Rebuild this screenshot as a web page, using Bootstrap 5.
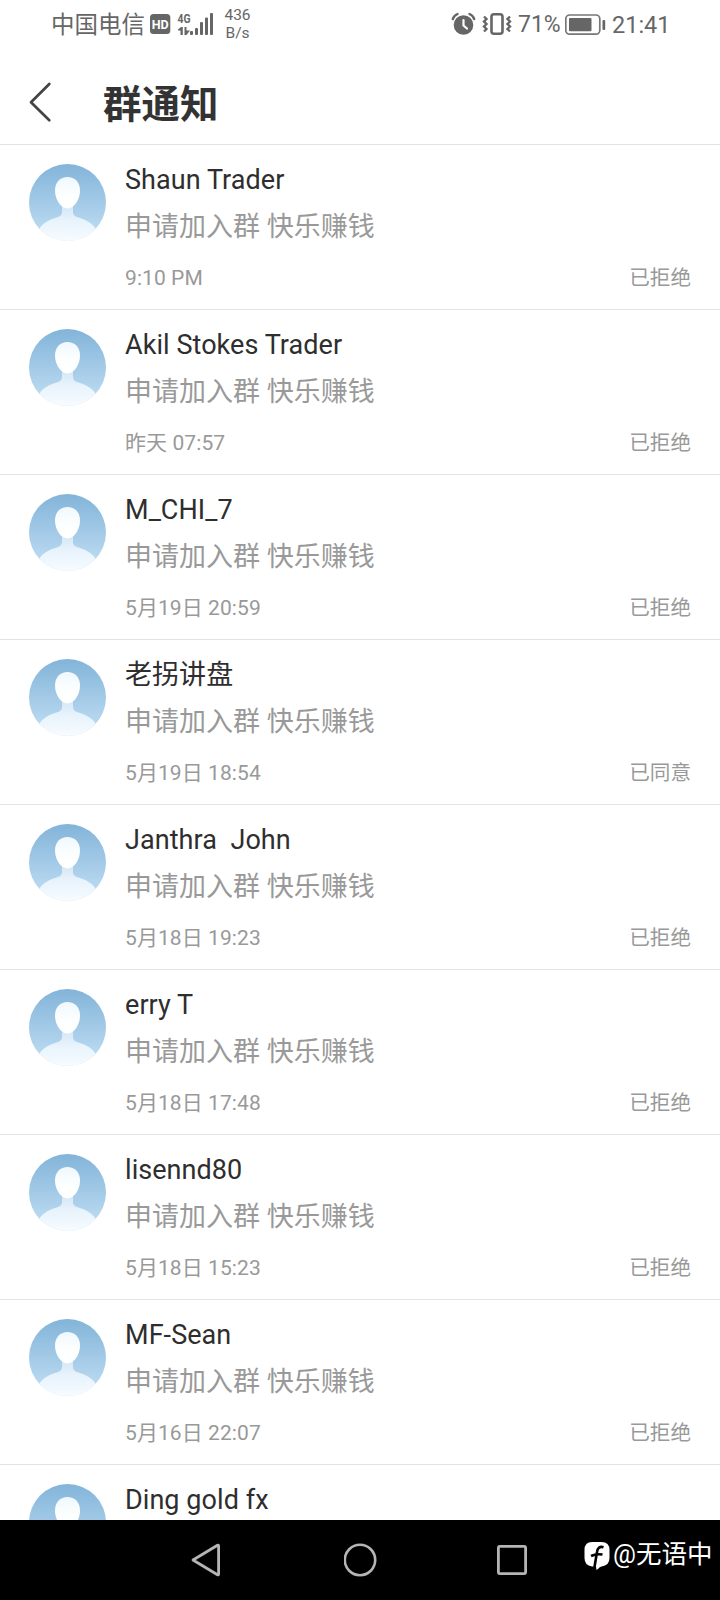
<!DOCTYPE html>
<html lang="zh-CN">
<head>
    <meta charset="UTF-8">
    <meta name="viewport" content="width=device-width, initial-scale=1.0">
    <title>群通知</title>
    <link href="https://cdn.jsdelivr.net/npm/bootstrap@5.3.3/dist/css/bootstrap.min.css" rel="stylesheet">
    <style>
        body { font-family: Roboto, "Noto Sans CJK SC", sans-serif; color: #2e2e2e; background: #fff; }
        svg { display: block; flex: none; }
        .screen { width: 720px; height: 1600px; }

        .status-bar { height: 50px; padding: 0 51px 0 51px; color: #666; font-size: 23.5px; line-height: 50px; }
        .status-bar svg { margin-top: 10px; }
        .carrier { width: 99px; }
        .net-speed { font-size: 15.5px; line-height: 18px; padding-top: 6px; width: 45px; }
        .battery-text { font-size: 23px; width: 47px; margin-left: 5px; }
        .clock { width: 57px; margin-left: 6px; }

        .title-bar { height: 95px; border-bottom: 1px solid #e3e3e3; padding-left: 28px; }
        .title-bar h1 { font-size: 38.5px; line-height: 50px; margin: 26px 0 0 51px; padding-top: 4px; color: #333; }
        .title-bar svg { margin-top: 30px; }

        .notice { height: 165px; border-bottom: 1px solid #e3e3e3; padding: 17px 29px 15px 29px; }
        .notice .avatar { margin: 2px 19px 0 0; }
        .notice-name { font-size: 27px; height: 36px; line-height: 36px; white-space: pre; letter-spacing: .06px; }
        .notice-msg { font-size: 27px; height: 36px; line-height: 36px; margin-top: 11px; color: #999; }
        .notice-foot { font-size: 21px; height: 30px; line-height: 30px; margin-top: 18px; color: #999; }
        .notice-time { letter-spacing: .08px; }
        .notice-status { font-size: 20.6px; }

        .nav-keys { height: 80px; padding-left: 191px; }
        .nav-keys .key-home { margin-left: 123px; }
        .nav-keys .key-recent { margin-left: 118px; }
        .watermark { margin-left: 56px; font-size: 25.5px; line-height: 36px; height: 36px; margin-bottom: 11px; }
        .watermark svg { margin-right: 3px; margin-top: 2px; }
        .watermark span { margin-top: -1px; }
    </style>
</head>
<body>
    <!-- Avatar padrão, reutilizado em cada linha -->
    <svg width="0" height="0" class="position-absolute">
        <defs>
            <linearGradient id="skyFill" x1="0" y1="0" x2="0" y2="1">
                <stop offset="0" stop-color="#82b4d9"/>
                <stop offset="1" stop-color="#c4e0f5"/>
            </linearGradient>
            <linearGradient id="headFill" x1="0" y1="0" x2="0" y2="1">
                <stop offset="0" stop-color="#f0f8fd"/>
                <stop offset=".6" stop-color="#fdffff"/>
                <stop offset="1" stop-color="#ffffff"/>
            </linearGradient>
            <linearGradient id="bodyFill" x1="0" y1="0" x2="0" y2="1">
                <stop offset="0" stop-color="#d3e5f5"/>
                <stop offset=".45" stop-color="#e8f3fc"/>
                <stop offset="1" stop-color="#f7fcff"/>
            </linearGradient>
            <clipPath id="roundClip"><circle cx="38.5" cy="38.5" r="38.5"/></clipPath>
            <symbol id="avatar" viewBox="0 0 77 77">
                <g clip-path="url(#roundClip)">
                    <rect width="77" height="77" fill="url(#skyFill)"/>
                    <path d="M33 40V48Q33 51.500 29 53C21 55.500 13 59 10.500 65L10 77H67L66.500 65C64 59 56 55.500 48 53Q44 51.500 44 48V40Z" fill="url(#bodyFill)"/>
                    <path d="M38.500 13C45.500 13 51 18 51 26.500C51 36 45 44.500 38.500 44.500C32 44.500 26 36 26 26.500C26 18 31.500 13 38.500 13Z" fill="url(#headFill)"/>
                </g>
            </symbol>
        </defs>
    </svg>

    <div class="screen d-flex flex-column overflow-hidden">
        <div class="status-bar d-flex align-items-start flex-shrink-0">
            <div class="carrier text-nowrap">中国电信</div>
            <!-- HD, 4G e sinal -->
            <svg width="65" height="30" viewBox="150 10 65 30" fill="#666">
                <rect x="150" y="14" width="20.300" height="20" rx="3.500"/>
                <text x="151.700" y="28.800" font-size="13" font-weight="700" fill="#fff" textLength="17" lengthAdjust="spacingAndGlyphs">HD</text>
                <text x="177.500" y="23" font-size="13.500" font-weight="700" textLength="13" lengthAdjust="spacingAndGlyphs">4G</text>
                <path d="M178 29.500L181 27H182.800V35H180.500V30.500H178ZM184.500 27H186.500V30.500H190L186.500 35H184.500Z"/>
                <rect x="190" y="31" width="3" height="4" rx="1"/>
                <rect x="195" y="28" width="3" height="7" rx="1"/>
                <rect x="200" y="22" width="3" height="13" rx="1"/>
                <rect x="205" y="17.500" width="3" height="17.500" rx="1"/>
                <rect x="210" y="13" width="3" height="22" rx="1"/>
            </svg>
            <div class="net-speed text-center">436<br>B/s</div>
            <!-- Alarme e vibração -->
            <svg class="ms-auto" width="62" height="30" viewBox="451 10 62 30" fill="none" stroke="#666">
                <circle cx="463.500" cy="25" r="9.800" fill="#666" stroke="none"/>
                <path d="M452.800 19Q454 15.500 457.500 14M469.500 14Q473 15.500 474.200 19" stroke-width="2.400" stroke-linecap="round"/>
                <path d="M463.500 20V25.500L467 28.500" stroke="#fff" stroke-width="2.200" stroke-linecap="round"/>
                <rect x="491.500" y="14.300" width="11" height="19.500" rx="2.500" stroke-width="2.600"/>
                <path d="M484 16.500L486.500 19L484 21.500L486.500 24L484 26.500L486.500 29L484 31.500M510 16.500L507.500 19L510 21.500L507.500 24L510 26.500L507.500 29L510 31.500" stroke-width="2.400"/>
            </svg>
            <div class="battery-text">71%</div>
            <svg width="41" height="30" viewBox="565 10 41 30">
                <rect x="565.800" y="15" width="34" height="19.200" rx="4" fill="none" stroke="#777" stroke-width="1.700"/>
                <rect x="569" y="18" width="22.500" height="13.300" rx="1" fill="#666"/>
                <rect x="602.500" y="20" width="2.700" height="10" rx="1" fill="#666"/>
            </svg>
            <div class="clock">21:41</div>
        </div>

        <header class="title-bar d-flex align-items-start flex-shrink-0">
            <svg width="24" height="44" viewBox="28 80 24 44" fill="none" stroke="#444" stroke-width="2.700" stroke-linecap="round" stroke-linejoin="round">
                <path d="M49.300 84L31 102.200L49.300 120.300"/>
            </svg>
            <h1 class="fw-bold">群通知</h1>
        </header>

        <main id="noticeList" class="flex-grow-1 overflow-hidden"></main>

        <footer class="nav-keys d-flex align-items-center flex-shrink-0 bg-black text-white">
            <svg width="30" height="34" viewBox="0 0 30 34" fill="none" stroke="#b5b5b5" stroke-width="2.800" stroke-linejoin="round">
                <path d="M2 17L26.500 2.300Q27.600 1.800 27.600 3V31Q27.600 32.200 26.500 31.700Z"/>
            </svg>
            <svg class="key-home" width="34" height="34" viewBox="0 0 34 34" fill="none" stroke="#b5b5b5" stroke-width="2.600">
                <circle cx="16" cy="17" r="15.200"/>
            </svg>
            <svg class="key-recent" width="32" height="32" viewBox="0 0 32 32" fill="none" stroke="#b5b5b5" stroke-width="2.800">
                <rect x="2.400" y="2.400" width="27.200" height="27.200" rx="1.500"/>
            </svg>
            <div class="watermark d-flex align-items-center text-nowrap">
                <svg width="26" height="30" viewBox="0 0 26 30">
                    <path d="M8 1H17.500Q25.500 1 25.500 9V17Q25.500 24.500 17.500 25.500Q15.500 26 14.500 27.500L12.500 29L12 25.500H8Q.5 24.500 .5 17V9Q.5 1 8 1Z" fill="#fff"/>
                    <path d="M19.500 6.200C15.500 5 13.500 7 13 11L10.500 26M7 15Q12 12.500 18.500 13.500" fill="none" stroke="#000" stroke-width="2.600"/>
                </svg>
                <span>@无语中</span>
            </div>
        </footer>
    </div>

    <script src="https://cdn.jsdelivr.net/npm/bootstrap@5.3.3/dist/js/bootstrap.bundle.min.js"></script>
    <script>
        const notices = [
            { name: 'Shaun Trader', time: '9:10 PM', status: '已拒绝' },
            { name: 'Akil Stokes Trader', time: '昨天 07:57', status: '已拒绝' },
            { name: 'M_CHI_7', time: '5月19日 20:59', status: '已拒绝' },
            { name: '老拐讲盘', time: '5月19日 18:54', status: '已同意' },
            { name: 'Janthra  John', time: '5月18日 19:23', status: '已拒绝' },
            { name: 'erry T', time: '5月18日 17:48', status: '已拒绝' },
            { name: 'lisennd80', time: '5月18日 15:23', status: '已拒绝' },
            { name: 'MF-Sean', time: '5月16日 22:07', status: '已拒绝' },
            { name: 'Ding gold fx', time: '', status: '' }
        ];

        document.getElementById('noticeList').innerHTML = notices.map(notice => `
<div class="notice d-flex align-items-start">
    <svg class="avatar" width="77" height="77"><use href="#avatar"/></svg>
    <div class="flex-grow-1">
        <div class="notice-name">${notice.name}</div>
        ${notice.time ? `<div class="notice-msg">申请加入群 快乐赚钱</div>
        <div class="notice-foot d-flex justify-content-between">
            <span class="notice-time">${notice.time}</span>
            <span class="notice-status">${notice.status}</span>
        </div>` : ''}
    </div>
</div>`).join('');
    </script>
</body>
</html>
